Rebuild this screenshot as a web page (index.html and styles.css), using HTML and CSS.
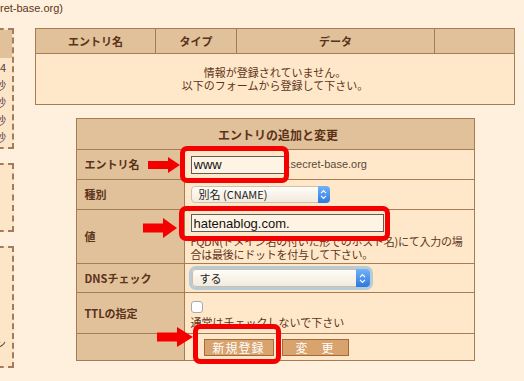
FILE: index.html
```html
<!DOCTYPE html>
<html lang="ja">
<head>
    <meta charset="UTF-8">
    <meta name="viewport" content="width=device-width, initial-scale=1.0">
    <title>DNSレコード設定</title>
    <link rel="stylesheet" href="styles.css">
</head>
<body>
    <div class="site-title">ret-base.org)</div>
    <div class="page">
        <div class="sidebar">
            <div class="side-box">
                <div class="side-head"></div>
                <ul class="side-list">
                    <li>件数 4</li>
                    <li>300秒</li>
                    <li>600秒</li>
                    <li>900秒</li>
                    <li>3600秒</li>
                </ul>
            </div>
            <div class="side-box side-box-2"></div>
            <div class="side-box side-box-3">
                <p class="side-foot">ログイン</p>
            </div>
        </div>

        <div class="content">
            <table class="list">
                <thead>
                    <tr>
                        <th class="col-name">エントリ名</th>
                        <th class="col-type">タイプ</th>
                        <th class="col-data">データ</th>
                        <th class="col-op"></th>
                    </tr>
                </thead>
                <tbody>
                    <tr>
                        <td colspan="4">情報が登録されていません。<br>以下のフォームから登録して下さい。</td>
                    </tr>
                </tbody>
            </table>

            <form>
                <table class="entry">
                    <tr>
                        <th colspan="2" class="caption">エントリの追加と変更</th>
                    </tr>
                    <tr class="row-name">
                        <th class="label">エントリ名</th>
                        <td>
                            <div class="inline">
                                <input type="text" class="text-input name-input" value="www">
                                <span class="domain">.secret-base.org</span>
                            </div>
                        </td>
                    </tr>
                    <tr class="row-type">
                        <th class="label">種別</th>
                        <td>
                            <div class="select">
                                <span class="select-text">別名 (CNAME)</span>
                                <span class="select-btn">
                                    <svg width="7" height="11" viewBox="0 0 7 11"><path d="M1 4.2 L3.5 1.6 L6 4.2 M1 6.8 L3.5 9.4 L6 6.8" fill="none" stroke="#fff" stroke-width="1.2"/></svg>
                                </span>
                            </div>
                        </td>
                    </tr>
                    <tr class="row-value">
                        <th class="label">値</th>
                        <td>
                            <input type="text" class="text-input value-input" value="hatenablog.com.">
                            <p class="help">FQDN(ドメイン名の付いた形でのホスト名)にて入力の場<br>合は最後にドットを付与して下さい。</p>
                        </td>
                    </tr>
                    <tr class="row-dns">
                        <th class="label">DNSチェック</th>
                        <td>
                            <div class="select select-wide">
                                <span class="select-text">する</span>
                                <span class="select-btn">
                                    <svg width="7" height="11" viewBox="0 0 7 11"><path d="M1 4.2 L3.5 1.6 L6 4.2 M1 6.8 L3.5 9.4 L6 6.8" fill="none" stroke="#fff" stroke-width="1.2"/></svg>
                                </span>
                            </div>
                        </td>
                    </tr>
                    <tr class="row-ttl">
                        <th class="label">TTLの指定</th>
                        <td>
                            <input type="checkbox" class="check">
                            <p class="note">通常はチェックしないで下さい</p>
                        </td>
                    </tr>
                    <tr class="row-buttons">
                        <th class="label"></th>
                        <td>
                            <div class="buttons">
                                <button type="button" class="btn">新規登録</button>
                                <button type="button" class="btn btn-edit">変　更</button>
                            </div>
                        </td>
                    </tr>
                </table>
            </form>
        </div>
    </div>

    <!-- 注釈 -->
    <div class="mark mark-name"></div>
    <div class="mark mark-value"></div>
    <div class="mark mark-submit"></div>
    <svg class="arrow arrow-name" width="32" height="16" viewBox="0 0 32 16"><polygon points="0,4 20,4 20,0 32,8 20,16 20,12 0,12" fill="#f50000"/></svg>
    <svg class="arrow arrow-value" width="34" height="20" viewBox="0 0 34 20"><polygon points="0,5.5 20,5.5 20,0 34,10 20,20 20,14.5 0,14.5" fill="#f50000"/></svg>
    <svg class="arrow arrow-submit" width="36" height="20" viewBox="0 0 36 20"><polygon points="0,5.5 20,5.5 20,0 36,10 20,20 20,14.5 0,14.5" fill="#f50000"/></svg>
</body>
</html>
```

FILE: styles.css
```css
body {
    margin: 0;
    background-color: #fef0dc;
    font-family: "Noto Sans CJK JP", sans-serif;
    font-size: 11px;
    color: #5e341c;
    overflow: hidden;
    position: relative;
}
.site-title {
    height: 28px;
    line-height: 16px;
    font-family: "Liberation Sans", sans-serif;
    font-size: 11px;
    color: #5e341c;
}
.page {
    display: flex;
    align-items: flex-start;
}
.sidebar {
    flex: none;
    width: 150px;
    margin-left: -136px;
    display: flex;
    flex-direction: column;
    gap: 14px;
}
.side-box {
    border: 2px dashed #a27c5c;
    background-color: #fde6c8;
}
.side-head {
    height: 28px;
    background-color: #e1c199;
}
.side-list {
    list-style: none;
    margin: 0;
    padding: 1px 6px 0 0;
    height: 89px;
    box-sizing: border-box;
    text-align: right;
    line-height: 17.5px;
    color: #5a3a4a;
}
.side-box-2 {
    height: 65px;
}
.side-box-3 {
    height: 118px;
    display: flex;
    align-items: flex-end;
    justify-content: flex-end;
}
.side-foot {
    margin: 0 6px 16px 0;
    line-height: 14px;
}
.content {
    margin-left: 21px;
    width: 480px;
}
.list {
    width: 480px;
    border-collapse: collapse;
    background-color: #ffe8c9;
    border: 1px solid #a67c55;
}
.list th {
    height: 24px;
    padding: 0;
    background-color: #e1c199;
    border: 1px solid #a67c55;
    font-weight: bold;
    font-size: 11px;
    color: #5b3219;
}
.col-name { width: 119px; }
.col-type { width: 80px; }
.col-data { width: 197px; }
.list td {
    height: 50px;
    padding: 0;
    text-align: center;
    line-height: 13px;
    font-size: 11px;
}
.entry {
    width: 399px;
    margin: 13px auto 0;
    border-collapse: collapse;
    background-color: #ffe8c9;
    border: 1px solid #a67c55;
}
.entry th,
.entry td {
    border: 1px solid #a67c55;
    padding: 0 0 0 6px;
    line-height: 13px;
}
.entry th {
    background-color: #e1c199;
    font-weight: bold;
    color: #5b3219;
}
.caption {
    height: 30px;
    font-size: 12px;
    text-align: center;
}
.label {
    width: 99px;
    text-align: left;
    font-size: 11px;
}
.entry .label {
    padding-left: 8px;
}
.row-name td, .row-name th { height: 29px; }
.row-type td, .row-type th { height: 29px; }
.row-value th { height: 53px; }
.row-value td { height: 49px; }
.row-dns td, .row-dns th { height: 28px; }
.row-ttl th { height: 40px; }
.row-ttl td { height: 32px; }
.row-buttons td, .row-buttons th { height: 26px; }
.row-value td {
    vertical-align: top;
    padding-top: 4px;
}
.inline {
    display: flex;
    align-items: center;
    gap: 3px;
}
.text-input {
    display: block;
    height: 18px;
    margin: 0;
    padding: 0 2px;
    box-sizing: border-box;
    border: 1px solid #5c5c5c;
    border-radius: 0;
    background-color: #fff4e4;
    font-family: "Liberation Sans", sans-serif;
    font-size: 13px;
    color: #111;
    outline: none;
}
.name-input {
    width: 94px;
}
.value-input {
    width: 193px;
}
.domain {
    font-family: "Liberation Sans", sans-serif;
    font-size: 11px;
    color: #5a4a3e;
}
.help {
    margin: 3px 0 0;
    line-height: 13px;
    font-size: 11px;
    letter-spacing: -0.25px;
    white-space: nowrap;
}
.select {
    display: flex;
    align-items: center;
    width: 139px;
    height: 17px;
    box-sizing: border-box;
    border: 1px solid #cbbfae;
    border-radius: 4px;
    background: linear-gradient(#fffdf8, #f2eadd);
    font-size: 11px;
    color: #222;
}
.select-text {
    flex: 1;
    padding-left: 7px;
    line-height: 15px;
}
.select-btn {
    align-self: stretch;
    width: 12px;
    margin: -1px -1px -1px 0;
    display: flex;
    align-items: center;
    justify-content: center;
    border-radius: 0 4px 4px 0;
    background: linear-gradient(#72b2f6, #2c79df);
}
.select-wide {
    width: 178px;
    height: 18px;
    margin-left: 1px;
    box-shadow: 0 0 0 3px #b6cbd6;
}
.select-wide .select-btn {
    width: 14px;
}
.check {
    appearance: none;
    display: block;
    width: 12px;
    height: 12px;
    margin: 0;
    border: 1px solid #aaa;
    border-radius: 3px;
    background-color: #fff;
}
.note {
    margin: 3px 0 0;
    line-height: 13px;
}
.row-ttl td {
    vertical-align: top;
    padding-top: 8px;
}
.buttons {
    display: flex;
    gap: 8px;
    margin-left: 13px;
}
.btn {
    width: 70px;
    height: 17px;
    padding: 0;
    background-color: #d8a36d;
    border: 1px solid #a36a3a;
    color: #fff;
    font-family: "Noto Sans CJK JP", sans-serif;
    font-size: 12px;
    line-height: 15px;
    letter-spacing: 1px;
}
.btn-edit {
    width: 67px;
}
.mark {
    position: absolute;
    box-sizing: border-box;
    border: 5px solid #f50000;
    border-radius: 7px;
}
.mark-name {
    left: 180px;
    top: 146px;
    width: 109px;
    height: 37px;
}
.mark-value {
    left: 179px;
    top: 206px;
    width: 211px;
    height: 35px;
}
.mark-submit {
    left: 193px;
    top: 324px;
    width: 88px;
    height: 40px;
}
.arrow {
    position: absolute;
}
.arrow-name {
    left: 148px;
    top: 157px;
}
.arrow-value {
    left: 143px;
    top: 218px;
}
.arrow-submit {
    left: 157px;
    top: 327px;
}
```
